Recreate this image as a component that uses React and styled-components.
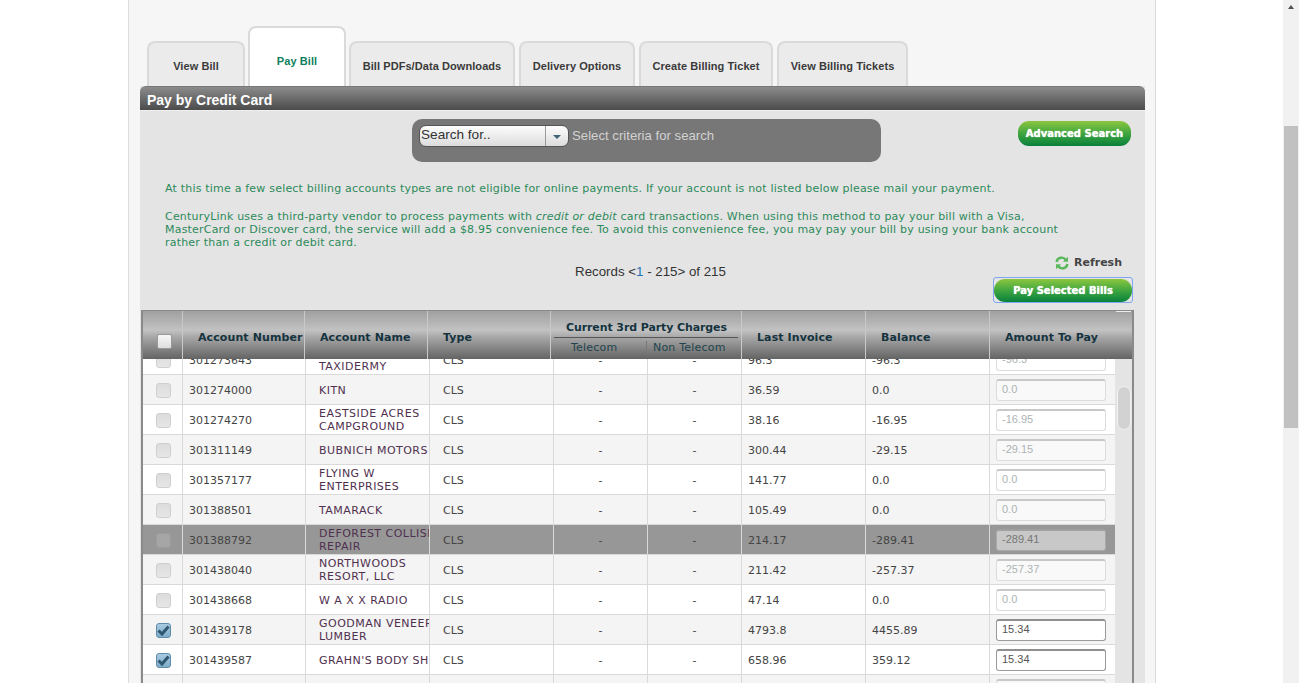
import React from 'react';
import styled, { createGlobalStyle } from 'styled-components';

const Global = createGlobalStyle`
  html, body { margin: 0; padding: 0; height: 683px; overflow: hidden; background: #fff; }
  * { box-sizing: border-box; }
`;
const Page = styled.div`display: flex; width: 1299px; height: 683px; overflow: hidden; background: #fff;`;
const Gutter = styled.div`flex: 1; padding-left: 128px;`;
const Sheet = styled.main`
  width: 1028px; height: 683px; padding: 26px 10px 0 11px; background: #f6f6f6;
  border-left: 1px solid #dcdcdc; border-right: 1px solid #dcdcdc; overflow: hidden;
`;
const Scrollbar = styled.div`width: 16px; height: 683px; background: #f1f1f1; padding: 5px 1px 0; display: flex; flex-direction: column; align-items: center;`;
const Arrow = styled.div`width: 0; height: 0; border-left: 3px solid transparent; border-right: 3px solid transparent; border-bottom: 4px solid #505050;`;
const Thumb = styled.div`width: 14px; height: 302px; margin-top: 117px; background: #c1c1c1;`;
const Tabs = styled.nav`display: flex; align-items: flex-end; height: 60px; padding-left: 7px;`;
const Tab = styled.div`
  width: ${p => p.$w}px; height: ${p => p.$active ? 60 : 45}px; margin-right: ${p => p.$gap}px;
  padding-top: ${p => p.$active ? 23 : 13}px; text-align: center;
  border: 2px solid #dadada; border-bottom: 0; border-radius: 8px 8px 0 0;
  background: ${p => p.$active ? '#fff' : '#ebebeb'};
  color: ${p => p.$active ? '#0f7f5f' : '#3a3a3a'};
  font: bold 11px/20px "Liberation Sans", Arial, sans-serif; letter-spacing: .07px; white-space: nowrap;
`;
const Panel = styled.section`width: 1005px; background: #e4e4e4; height: 597px;`;
const PanelHead = styled.h2`
  margin: 0; height: 25px; padding: 4px 0 0 7px; border-radius: 6px 6px 0 0;
  background: linear-gradient(#8b8b8b, #4b4b4b); border-top: 1px solid #777; border-bottom: 1px solid #f0f0f0;
  color: #fff; font: bold 14px/18px "Liberation Sans", Arial, sans-serif;
`;
const TopRow = styled.div`display: flex; justify-content: space-between; align-items: flex-start; padding: 8px 14px 0 272px;`;
const SearchBox = styled.div`
  width: 469px; height: 43px; padding: 6px 7px; display: flex; align-items: flex-start; gap: 3px;
  background: #777; border-radius: 10px;
`;
const Select = styled.div`
  width: 150px; height: 22px; display: flex; border: 1px solid #555; border-radius: 7px;
  background: linear-gradient(#fdfdfd, #dcdcdc); overflow: hidden;
  color: #333; font: 13.6px/17px "Liberation Sans", Arial, sans-serif;
`;
const SelectText = styled.span`flex: 1; padding-left: 1px;`;
const SelectBtn = styled.span`
  width: 23px; border-left: 1px solid #999; display: flex; align-items: center; justify-content: center;
  &::after { content: ''; margin-top: 2px; border-left: 4px solid transparent; border-right: 4px solid transparent; border-top: 4px solid #3f6478; }
`;
const Hint = styled.span`color: #d2d2d2; font: 13.2px/21px "Liberation Sans", Arial, sans-serif;`;
const GreenBtn = styled.button`
  display: block; width: ${p => p.$w}px; height: ${p => p.$h}px; margin-top: ${p => p.$top || 0}px; padding: 0; border: 0; border-radius: 11px;
  background: linear-gradient(#8cc63f, #3fa63f 50%, #08803c);
  color: #fff; font: bold 10px/${p => p.$h - 1}px "DejaVu Sans", Verdana, sans-serif; text-shadow: 0 0 1px #fff;
`;
const Notes = styled.div`padding: 20px 78px 0 25px; color: #2c8a5a; font: 11px/13px "DejaVu Sans", Verdana, sans-serif; letter-spacing: .2px;`;
const Note = styled.p`margin: 0 0 15px; &:last-child { margin-bottom: 0; }`;
const ActionRow = styled.div`display: grid; grid-template-columns: 1fr 152px; margin-top: 1px; height: 60px;`;
const Records = styled.div`padding: 12px 0 0 168px; text-align: center; color: #333; font: 13.3px/20px "Liberation Sans", Arial, sans-serif;`;
const RecLink = styled.span`color: #1f6fb5;`;
const Actions = styled.div`display: flex; flex-direction: column; align-items: flex-end; padding-right: 12px;`;
const Refresh = styled.div`
  display: flex; align-items: center; gap: 5px; height: 15px; margin: 5px 11px 7px 0;
  color: #444; font: bold 11px/15px "DejaVu Sans", Verdana, sans-serif;
`;
const Focus = styled.div`width: 140px; height: 26px; padding: 1px 0 0 0; border: 1px solid #7fa6f0; border-radius: 3px;`;
const Table = styled.div`
  width: 993px; margin-left: 1px; height: 374px; border: 2px solid #8a8a8a; border-bottom: 0; border-top-width: 1px;
  background: #e4e4e4; overflow: hidden;
`;
const headCols = '39px 122px 123px 123px 191px 124px 124px 143px';
const Head = styled.div`
  position: relative; z-index: 1; display: grid; grid-template-columns: ${headCols}; height: 48px;
  background: linear-gradient(#a0a0a0, #c2c2c2 40%, #a6a6a6 55%, #646464);
  color: #15333f; font: bold 11px/14px "DejaVu Sans", Verdana, sans-serif; letter-spacing: .1px;
`;
const Glint = styled.span`position: absolute; top: 0; right: 1px; width: 15px; height: 1px; background: #ececec;`;
const HeadCell = styled.div`
  display: flex; align-items: center; padding: 6px 0 0 ${p => p.$pad}px; border-left: ${p => p.$first ? 0 : '1px solid #c9c9c9'}; white-space: nowrap;
`;
const HeadGroup = styled.div`border-left: 1px solid #c9c9c9; padding: 8px 3px 0 3px; letter-spacing: -.1px;`;
const GroupTitle = styled.div`height: 19px; padding: 2px 0 0 12px; border-bottom: 1px solid #555;`;
const SubHeads = styled.div`display: grid; grid-template-columns: 92px 1fr; font-weight: normal; color: #1d444c; padding-top: 3px; letter-spacing: .2px;`;
const SubHead = styled.div`padding-left: ${p => p.$pad}px; border-left: ${p => p.$line ? '1px solid #777' : 0};`;
const BodyWrap = styled.div`display: grid; grid-template-columns: 972px 17px; height: 325px; overflow: hidden;`;
const Rows = styled.div`margin-top: -14px;`;
const cols = '39px 123px 124px 124px 94px 94px 124px 124px 126px';
const Row = styled.div`
  display: grid; grid-template-columns: ${cols}; height: 30px;
  background: ${p => p.$selected ? '#979797' : p.$odd ? '#f4f4f4' : '#fff'};
  color: #444; font: 11px/13px "DejaVu Sans", Verdana, sans-serif;
`;
const Cell = styled.div`
  display: flex; align-items: center; padding: 1px 0 0 ${p => p.$pad ?? 6}px; overflow: hidden; white-space: nowrap;
  justify-content: ${p => p.$center ? 'center' : 'flex-start'};
  border-bottom: 1px solid #d9d9d9; border-left: ${p => p.$first ? 0 : '1px solid #d9d9d9'};
`;
const NameCell = styled(Cell)`color: #50304f; display: block; padding: ${p => p.$single ? '9px' : '2px'} 0 0 13px; letter-spacing: .48px;`;
const Box = styled.div`
  width: 15px; height: 15px; margin-left: 1px; border-radius: 3px; display: flex; align-items: center; justify-content: center;
  background: ${p => p.$checked ? 'linear-gradient(#a9cbe2, #7fabc8)' : p.$selected ? '#a6a6a6' : 'linear-gradient(#dcdcdc, #e6e6e6)'};
  border: 1px solid ${p => p.$checked ? '#5f8cab' : p.$selected ? '#9c9c9c' : '#cfcfcf'};
`;
const HeadBox = styled.div`width: 15px; height: 15px; margin-top: 6px; border-radius: 2px; border: 1px solid #999; background: linear-gradient(#f7f7f7, #dedede);`;
const Amount = styled.div`
  width: 110px; height: 22px; margin-top: -1px; padding-left: 5px; border-radius: 3px; white-space: nowrap;
  background: ${p => p.$selected ? '#c8c8c8' : p.$active ? '#fff' : p.$odd ? '#f9f9f9' : '#fff'};
  border: 1px solid ${p => p.$active ? '#9a9a9a' : p.$selected ? '#a9a9a9' : '#dcdcdc'};
  border-top: 2px solid ${p => p.$active ? '#8f8f8f' : p.$selected ? '#a0a0a0' : '#c8c8c8'};
  color: ${p => p.$active ? '#555' : p.$selected ? '#777' : '#aeb4b4'};
  font: 11px/17px "Liberation Sans", Arial, sans-serif;
`;
const Track = styled.div`background: #e4e4e4; padding: 27px 0 0 2px;`;
const InnerThumb = styled.div`width: 14px; height: 44px; background: #d2d2d2; border: 1px solid #f2f2f2; border-radius: 7px;`;

const tabs = [
  ['View Bill', 98, 3], ['Pay Bill', 98, 3, true], ['Bill PDFs/Data Downloads', 166, 4],
  ['Delivery Options', 116, 4], ['Create Billing Ticket', 134, 4], ['View Billing Tickets', 131, 0],
];
const data = [
  ['301273643', ['', 'TAXIDERMY'], '96.3', '-96.3', '-96.3'],
  ['301274000', ['KITN'], '36.59', '0.0', '0.0'],
  ['301274270', ['EASTSIDE ACRES', 'CAMPGROUND'], '38.16', '-16.95', '-16.95'],
  ['301311149', ['BUBNICH MOTORS'], '300.44', '-29.15', '-29.15'],
  ['301357177', ['FLYING W', 'ENTERPRISES'], '141.77', '0.0', '0.0'],
  ['301388501', ['TAMARACK'], '105.49', '0.0', '0.0'],
  ['301388792', ['DEFOREST COLLISION', 'REPAIR'], '214.17', '-289.41', '-289.41', 'selected'],
  ['301438040', ['NORTHWOODS', 'RESORT, LLC'], '211.42', '-257.37', '-257.37'],
  ['301438668', ['W A X X RADIO'], '47.14', '0.0', '0.0'],
  ['301439178', ['GOODMAN VENEER', 'LUMBER'], '4793.8', '4455.89', '15.34', 'checked'],
  ['301439587', ["GRAHN'S BODY SHOP"], '658.96', '359.12', '15.34', 'checked'],
];

const RefreshIcon = () => (
  <svg width="14" height="14" viewBox="0 0 14 14" fill="none" stroke="#5cb85c" strokeWidth="2.4">
    <path d="M1.6 6a5 5 0 0 1 9.2-2" />
    <path d="M13 .8v5H8z" fill="#5cb85c" stroke="none" />
    <path d="M12.4 8a5 5 0 0 1-9.2 2" />
    <path d="M1 13.2v-5h5z" fill="#5cb85c" stroke="none" />
  </svg>
);
const Check = () => (
  <svg width="13" height="11" viewBox="0 0 13 11" fill="none" stroke="#2f5870" strokeWidth="3">
    <path d="M1.5 5.5 5 9 11.5 1.5" />
  </svg>
);

export default function App() {
  return (
    <Page>
      <Global />
      <Gutter>
        <Sheet>
          <Tabs>
            {tabs.map(([t, w, g, a]) => <Tab key={t} $w={w} $gap={g} $active={a}>{t}</Tab>)}
          </Tabs>
          <Panel>
            <PanelHead>Pay by Credit Card</PanelHead>
            <TopRow>
              <SearchBox>
                <Select><SelectText>Search for..</SelectText><SelectBtn /></Select>
                <Hint>Select criteria for search</Hint>
              </SearchBox>
              <GreenBtn $w={113} $h={25} $top={2} type="button">Advanced Search</GreenBtn>
            </TopRow>
            <Notes>
              <Note>At this time a few select billing accounts types are not eligible for online payments. If your account is not listed below please mail your payment.</Note>
              <Note>CenturyLink uses a third-party vendor to process payments with <i>credit or debit</i> card transactions. When using this method to pay your bill with a Visa, MasterCard or Discover card, the service will add a $8.95 convenience fee. To avoid this convenience fee, you may pay your bill by using your bank account rather than a credit or debit card.</Note>
            </Notes>
            <ActionRow>
              <Records>Records &lt;<RecLink>1</RecLink> - 215&gt; of 215</Records>
              <Actions>
                <Refresh><RefreshIcon />Refresh</Refresh>
                <Focus><GreenBtn $w={138} $h={23} type="button">Pay Selected Bills</GreenBtn></Focus>
              </Actions>
            </ActionRow>
            <Table>
              <Head>
                <Glint />
                <HeadCell $first $pad={14}><HeadBox /></HeadCell>
                <HeadCell $pad={15}>Account Number</HeadCell>
                <HeadCell $pad={15}>Account Name</HeadCell>
                <HeadCell $pad={15}>Type</HeadCell>
                <HeadGroup>
                  <GroupTitle>Current 3rd Party Charges</GroupTitle>
                  <SubHeads>
                    <SubHead $pad={17}>Telecom</SubHead>
                    <SubHead $line $pad={6}>Non Telecom</SubHead>
                  </SubHeads>
                </HeadGroup>
                <HeadCell $pad={15}>Last Invoice</HeadCell>
                <HeadCell $pad={15}>Balance</HeadCell>
                <HeadCell $pad={15}>Amount To Pay</HeadCell>
              </Head>
              <BodyWrap>
                <Rows>
                  {data.map(([acct, name, last, bal, amt, state], i) => {
                    const selected = state === 'selected';
                    const checked = state === 'checked';
                    const odd = i % 2 === 1;
                    return (
                      <Row key={acct} $odd={odd} $selected={selected}>
                        <Cell $first $pad={0} $center><Box $checked={checked} $selected={selected}>{checked && <Check />}</Box></Cell>
                        <Cell>{acct}</Cell>
                        <NameCell $single={name.length === 1}>{name.map(n => <div key={n}>{n || '\u00a0'}</div>)}</NameCell>
                        <Cell $pad={13}>CLS</Cell>
                        <Cell $pad={0} $center>-</Cell>
                        <Cell $pad={0} $center>-</Cell>
                        <Cell>{last}</Cell>
                        <Cell>{bal}</Cell>
                        <Cell><Amount $odd={odd} $selected={selected} $active={checked}>{amt}</Amount></Cell>
                      </Row>
                    );
                  })}
                  <Row $odd>
                    <Cell $first /><Cell /><Cell /><Cell /><Cell /><Cell /><Cell /><Cell />
                    <Cell><Amount $odd /></Cell>
                  </Row>
                </Rows>
                <Track><InnerThumb /></Track>
              </BodyWrap>
            </Table>
          </Panel>
        </Sheet>
      </Gutter>
      <Scrollbar><Arrow /><Thumb /></Scrollbar>
    </Page>
  );
}
